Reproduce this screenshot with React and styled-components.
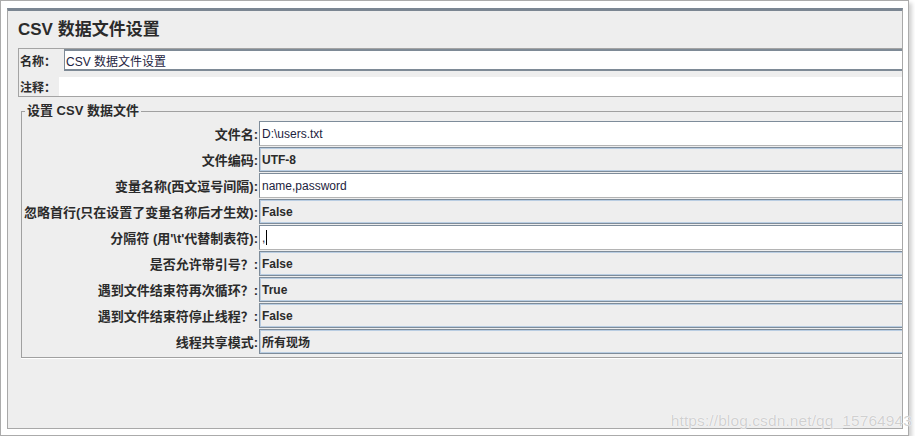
import React from 'react';
import styled, { createGlobalStyle } from 'styled-components';

const GlobalStyle = createGlobalStyle`
  html, body {
    margin: 0;
    padding: 0;
    background: #ffffff;
  }
  body {
    font-family: "Liberation Sans", "Noto Sans CJK SC", sans-serif;
    color: #2a2a2a;
  }
`;

const Frame = styled.div`
  position: relative;
  box-sizing: border-box;
  width: 909px;
  height: 436px;
  border: 1px solid #ababab;
  padding: 7px 5px 6px 6px;
  display: flex;
  background: #ffffff;
  box-shadow: 3px 3px 4px rgba(0, 0, 0, 0.18);
`;

const Panel = styled.div`
  flex: 1;
  display: flex;
  flex-direction: column;
  background: #eeeeee;
  border: 1px solid #a8a8a8;
  border-top: 3px solid #7b8692;
`;

const Title = styled.h1`
  margin: 9px 0 0 10px;
  font-size: 17px;
  line-height: 20px;
  font-weight: bold;
  color: #2b2b2b;
  font-family: "Liberation Sans", "Noto Sans CJK SC", sans-serif;
`;

const NameGroup = styled.div`
  margin: 8px 0 0 10px;
  display: flex;
  flex-direction: column;
  gap: 6px;
  border: 1px solid #a4a4a4;
  border-right: none;
`;

const NameRow = styled.div`
  display: flex;
  align-items: center;
  height: ${p => p.$h}px;
`;

const NameLabel = styled.span`
  width: ${p => p.$w}px;
  padding-left: 1px;
  font-size: 12px;
  font-weight: bold;
  color: #2b2b2b;
  font-family: "Noto Sans CJK SC", sans-serif;
  white-space: nowrap;
`;

const NameInput = styled.div`
  flex: 1;
  align-self: stretch;
  box-sizing: border-box;
  display: flex;
  align-items: center;
  padding-left: 1px;
  background: #ffffff;
  font-size: 12px;
  color: #1d2340;
  border-top: ${p => (p.$framed ? '2px solid #7e8a96' : 'none')};
  border-left: ${p => (p.$framed ? '1px solid #7e8a96' : 'none')};
  border-bottom: ${p => (p.$framed ? '2px solid #7e8a96' : 'none')};
`;

const Group = styled.fieldset`
  margin: 6px 0 0 13px;
  padding: 2px 0 3px 0;
  border: 1px solid #a0a0a0;
  border-right: none;
  box-shadow: -1px 0 0 #ffffff inset, 0 1px 0 #ffffff;
  min-width: 0;
`;

const Legend = styled.legend`
  margin-left: 3px;
  padding: 0 2px;
  font-size: 13px;
  line-height: 16px;
  font-weight: bold;
  color: #2b2b2b;
  font-family: "Liberation Sans", "Noto Sans CJK SC", sans-serif;
`;

const Grid = styled.div`
  display: grid;
  grid-template-columns: 237px 1fr;
  grid-auto-rows: 25px;
  row-gap: 1px;
`;

const Label = styled.div`
  display: flex;
  align-items: center;
  justify-content: flex-end;
  padding-right: 1px;
  font-size: 13px;
  font-weight: bold;
  color: #2b2b2b;
  font-family: "Liberation Sans", "Noto Sans CJK SC", sans-serif;
  white-space: nowrap;
`;

const Field = styled.div`
  box-sizing: border-box;
  display: flex;
  align-items: center;
  padding-left: 2px;
  font-size: 12px;
  font-family: "Liberation Sans", "Noto Sans CJK SC", sans-serif;
  white-space: nowrap;
  background: ${p => (p.$combo ? '#eeeeee' : '#ffffff')};
  color: ${p => (p.$combo ? '#2b2b2b' : '#1d2340')};
  font-weight: ${p => (p.$combo ? 'bold' : 'normal')};
  border: 1px solid #7e8c9a;
  border-right: none;
  border-bottom-color: ${p => (p.$combo ? '#7e8c9a' : '#b4b4b4')};
  box-shadow: ${p =>
    p.$combo ? 'inset 1px 1px 0 #b9cde2, inset 0 -1px 0 #b9cde2' : 'none'};
`;

const Caret = styled.span`
  display: inline-block;
  width: 1px;
  height: 15px;
  margin-left: 1px;
  background: #000000;
`;

const Watermark = styled.div`
  position: absolute;
  right: -4px;
  bottom: 5px;
  font-size: 15.5px;
  font-family: "Liberation Sans", sans-serif;
  color: rgba(200, 200, 200, 0.85);
  text-shadow: 0 0 1px #ffffff, 0 0 1px #ffffff;
  letter-spacing: 0.1px;
`;

const rows = [
  { label: '文件名:', value: 'D:\\users.txt' },
  { label: '文件编码:', value: 'UTF-8', combo: true },
  { label: '变量名称(西文逗号间隔):', value: 'name,password' },
  { label: '忽略首行(只在设置了变量名称后才生效):', value: 'False', combo: true },
  { label: "分隔符 (用'\\t'代替制表符):", value: ',', caret: true },
  { label: '是否允许带引号？:', value: 'False', combo: true },
  { label: '遇到文件结束符再次循环？:', value: 'True', combo: true },
  { label: '遇到文件结束符停止线程？:', value: 'False', combo: true },
  { label: '线程共享模式:', value: '所有现场', combo: true },
];

export default function App() {
  return (
    <>
      <GlobalStyle />
      <Frame>
        <Panel>
          <Title>CSV 数据文件设置</Title>
          <NameGroup>
            <NameRow $h={22}>
              <NameLabel $w={44}>名称：</NameLabel>
              <NameInput $framed>CSV 数据文件设置</NameInput>
            </NameRow>
            <NameRow $h={19}>
              <NameLabel $w={39}>注释：</NameLabel>
              <NameInput />
            </NameRow>
          </NameGroup>
          <Group>
            <Legend>设置 CSV 数据文件</Legend>
            <Grid>
              {rows.map(row => (
                <React.Fragment key={row.label}>
                  <Label>{row.label}</Label>
                  <Field $combo={row.combo}>
                    {row.value}
                    {row.caret && <Caret />}
                  </Field>
                </React.Fragment>
              ))}
            </Grid>
          </Group>
        </Panel>
        <Watermark>https://blog.csdn.net/qq_15764943</Watermark>
      </Frame>
    </>
  );
}
